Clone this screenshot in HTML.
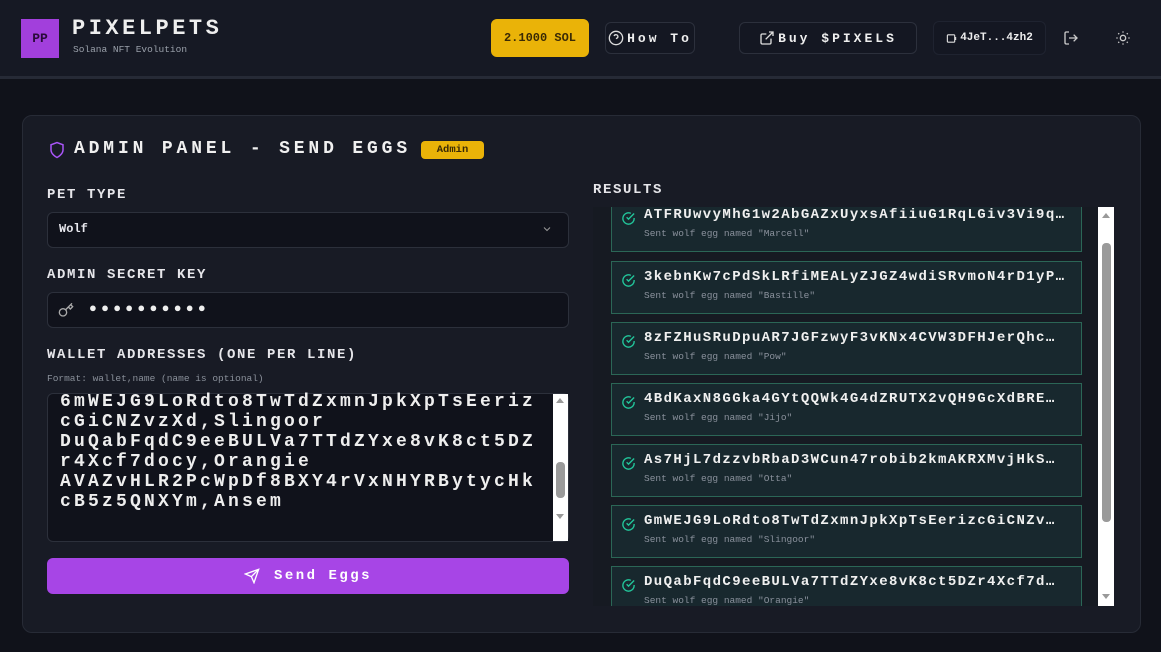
<!DOCTYPE html>
<html><head><meta charset="utf-8"><style>
*{box-sizing:border-box;margin:0;padding:0}
body{width:1161px;height:652px;overflow:hidden;background:#10121a;font-family:"Liberation Mono",monospace;color:#e8e8ee;position:relative}
.hdr{position:absolute;left:0;top:0;width:1161px;height:79px;background:#161924;border-bottom:3px solid #262a36}
.abs{position:absolute}
.logo{left:21px;top:19px;width:38px;height:39px;background:#a23fdc;color:#2a0a3a;font-weight:bold;font-size:13px;line-height:39px;text-align:center}
.btn{position:absolute;border:1px solid #2c303c;border-radius:6px;background:#141722;color:#eee;font-weight:bold;display:flex;align-items:center;justify-content:center;gap:3px}
.card{left:22px;top:115px;width:1119px;height:518px;background:#181b25;border:1px solid #272b36;border-radius:10px}
.lbl{font-size:14px;font-weight:bold;color:#e6e6ea;letter-spacing:1.6px}
.inp{position:absolute;left:47px;width:522px;background:#10121b;border:1px solid #2c303b;border-radius:6px}
.item{position:absolute;left:18px;width:471px;height:53px;background:#18282e;border:1px solid #2b6656}
.item .a{position:absolute;left:32px;top:7px;font-size:14px;font-weight:bold;color:#f0f0f0;white-space:nowrap;letter-spacing:1.4px}
.item .s{position:absolute;left:32px;top:28px;font-size:9.5px;color:#8a919c}
.item svg{position:absolute;left:9px;top:11px}
</style></head><body>
<div class="hdr"></div>
<div class="abs logo">PP</div>
<div class="abs" style="left:72px;top:16px;font-size:22px;font-weight:bold;color:#eee;letter-spacing:3.5px">PIXELPETS</div>
<div class="abs" style="left:73px;top:44px;font-size:9.5px;color:#9aa0aa">Solana NFT Evolution</div>
<div class="btn" style="left:491px;top:19px;width:98px;height:38px;background:#eab308;border-color:#eab308;color:#3a2a05;font-size:12px">2.1000 SOL</div>
<div class="btn" style="left:605px;top:22px;width:90px;height:32px;font-size:13px;letter-spacing:3px"><svg width="16" height="16" viewBox="0 0 24 24" fill="none" stroke="#ddd" stroke-width="2"><circle cx="12" cy="12" r="10"/><path d="M9.1 9a3 3 0 0 1 5.8 1c0 2-3 3-3 3M12 17h.01"/></svg>How To</div>
<div class="btn" style="left:739px;top:22px;width:178px;height:32px;font-size:13px;letter-spacing:3px"><svg width="16" height="16" viewBox="0 0 24 24" fill="none" stroke="#ddd" stroke-width="2"><path d="M15 3h6v6M10 14 21 3M18 13v6a2 2 0 0 1-2 2H5a2 2 0 0 1-2-2V8a2 2 0 0 1 2-2h6"/></svg>Buy $PIXELS</div>
<div class="btn" style="left:933px;top:21px;width:113px;height:34px;font-size:11px;border-color:#1f2330"><svg width="11" height="11" viewBox="0 0 24 24" fill="none" stroke="#ddd" stroke-width="2.5"><rect x="3" y="4" width="16" height="16" rx="2"/><path d="M19 10h2v4h-2"/></svg>4JeT...4zh2</div>
<svg class="abs" style="left:1063px;top:30px" width="16" height="16" viewBox="0 0 24 24" fill="none" stroke="#ccc" stroke-width="2"><path d="M9 21H5a2 2 0 0 1-2-2V5a2 2 0 0 1 2-2h4M16 17l5-5-5-5M21 12H9"/></svg>
<svg class="abs" style="left:1115px;top:30px" width="16" height="16" viewBox="0 0 24 24" fill="none" stroke="#ccc" stroke-width="2"><circle cx="12" cy="12" r="4"/><path d="M12 2v2M12 20v2M4.9 4.9l1.4 1.4M17.7 17.7l1.4 1.4M2 12h2M20 12h2M4.9 19.1l1.4-1.4M17.7 6.3l1.4-1.4"/></svg>

<div class="abs card"></div>
<svg class="abs" style="left:48px;top:140px" width="18" height="20" viewBox="0 0 24 24" fill="none" stroke="#a855f7" stroke-width="2"><path d="M12 22s8-4 8-10V5l-8-3-8 3v7c0 6 8 10 8 10z"/></svg>
<div class="abs" style="left:74px;top:139px;font-size:18px;font-weight:bold;color:#f0f0f0;letter-spacing:3.85px">ADMIN PANEL - SEND EGGS</div>
<div class="abs" style="left:421px;top:141px;width:63px;height:18px;background:#eab308;border-radius:4px;color:#3a2a05;font-size:10.5px;font-weight:bold;text-align:center;line-height:18px">Admin</div>

<div class="abs lbl" style="left:47px;top:187px">PET TYPE</div>
<div class="inp" style="top:212px;height:36px"></div>
<div class="abs" style="left:59px;top:222px;font-size:12px;font-weight:bold">Wolf</div>
<svg class="abs" style="left:541px;top:223px" width="12" height="12" viewBox="0 0 24 24" fill="none" stroke="#999" stroke-width="2"><path d="M6 9l6 6 6-6"/></svg>
<div class="abs lbl" style="left:47px;top:267px">ADMIN SECRET KEY</div>
<div class="inp" style="top:292px;height:36px"></div>
<svg class="abs" style="left:58px;top:302px" width="16" height="16" viewBox="0 0 24 24" fill="none" stroke="#aaa" stroke-width="2"><circle cx="7.5" cy="15.5" r="5.5"/><path d="M21 2l-9.6 9.6M15.5 7.5l3 3L22 7l-3-3"/></svg>
<div class="abs" style="left:89px;top:301px;font-size:13px;letter-spacing:4.3px;color:#eee">●●●●●●●●●●</div>
<div class="abs lbl" style="left:47px;top:347px">WALLET ADDRESSES (ONE PER LINE)</div>
<div class="abs" style="left:47px;top:373px;font-size:9.5px;color:#8a909a">Format: wallet,name (name is optional)</div>
<div class="inp" style="top:393px;height:149px;overflow:hidden"></div>
<div class="abs" style="left:60px;top:392px;font-size:18px;font-weight:bold;line-height:20px;color:#eee;white-space:pre;letter-spacing:3.2px">6mWEJG9LoRdto8TwTdZxmnJpkXpTsEeriz
cGiCNZvzXd,Slingoor
DuQabFqdC9eeBULVa7TTdZYxe8vK8ct5DZ
r4Xcf7docy,Orangie
AVAZvHLR2PcWpDf8BXY4rVxNHYRBytycHk
cB5z5QNXYm,Ansem</div>
<div class="abs" style="left:553px;top:394px;width:15px;height:147px;background:#fff"><div style="position:absolute;left:3px;top:68px;width:9px;height:36px;background:#9a9a9a;border-radius:4px"></div><div style="position:absolute;left:3px;top:4px;border:4px solid transparent;border-bottom:5px solid #999;border-top:0"></div><div style="position:absolute;left:3px;top:120px;border:4px solid transparent;border-top:5px solid #999;border-bottom:0"></div></div>
<div class="abs" style="left:47px;top:558px;width:522px;height:36px;background:#a745e6;border-radius:6px;display:flex;align-items:center;justify-content:center;gap:14px;font-weight:bold;font-size:14px;letter-spacing:2.5px;color:#fff"><svg width="16" height="16" viewBox="0 0 24 24" fill="none" stroke="#fff" stroke-width="2"><path d="M22 2 11 13M22 2l-7 20-4-9-9-4 20-7z"/></svg>Send Eggs</div>

<div class="abs lbl" style="left:593px;top:182px">RESULTS</div>
<div class="abs" style="left:593px;top:207px;width:521px;height:399px;background:#161a22;overflow:hidden">
<div class="item" style="top:-8px"><svg width="15" height="15" viewBox="0 0 24 24" fill="none" stroke="#22c59a" stroke-width="2.2"><path d="M21 11.1V12a9 9 0 1 1-5.3-8.2M21 4 12 13l-3-3"/></svg><div class="a">ATFRUwvyMhG1w2AbGAZxUyxsAfiiuG1RqLGiv3Vi9q…</div><div class="s">Sent wolf egg named "Marcell"</div></div>
<div class="item" style="top:54px"><svg width="15" height="15" viewBox="0 0 24 24" fill="none" stroke="#22c59a" stroke-width="2.2"><path d="M21 11.1V12a9 9 0 1 1-5.3-8.2M21 4 12 13l-3-3"/></svg><div class="a">3kebnKw7cPdSkLRfiMEALyZJGZ4wdiSRvmoN4rD1yP…</div><div class="s">Sent wolf egg named "Bastille"</div></div>
<div class="item" style="top:115px"><svg width="15" height="15" viewBox="0 0 24 24" fill="none" stroke="#22c59a" stroke-width="2.2"><path d="M21 11.1V12a9 9 0 1 1-5.3-8.2M21 4 12 13l-3-3"/></svg><div class="a">8zFZHuSRuDpuAR7JGFzwyF3vKNx4CVW3DFHJerQhc…</div><div class="s">Sent wolf egg named "Pow"</div></div>
<div class="item" style="top:176px"><svg width="15" height="15" viewBox="0 0 24 24" fill="none" stroke="#22c59a" stroke-width="2.2"><path d="M21 11.1V12a9 9 0 1 1-5.3-8.2M21 4 12 13l-3-3"/></svg><div class="a">4BdKaxN8GGka4GYtQQWk4G4dZRUTX2vQH9GcXdBRE…</div><div class="s">Sent wolf egg named "Jijo"</div></div>
<div class="item" style="top:237px"><svg width="15" height="15" viewBox="0 0 24 24" fill="none" stroke="#22c59a" stroke-width="2.2"><path d="M21 11.1V12a9 9 0 1 1-5.3-8.2M21 4 12 13l-3-3"/></svg><div class="a">As7HjL7dzzvbRbaD3WCun47robib2kmAKRXMvjHkS…</div><div class="s">Sent wolf egg named "Otta"</div></div>
<div class="item" style="top:298px"><svg width="15" height="15" viewBox="0 0 24 24" fill="none" stroke="#22c59a" stroke-width="2.2"><path d="M21 11.1V12a9 9 0 1 1-5.3-8.2M21 4 12 13l-3-3"/></svg><div class="a">GmWEJG9LoRdto8TwTdZxmnJpkXpTsEerizcGiCNZv…</div><div class="s">Sent wolf egg named "Slingoor"</div></div>
<div class="item" style="top:359px"><svg width="15" height="15" viewBox="0 0 24 24" fill="none" stroke="#22c59a" stroke-width="2.2"><path d="M21 11.1V12a9 9 0 1 1-5.3-8.2M21 4 12 13l-3-3"/></svg><div class="a">DuQabFqdC9eeBULVa7TTdZYxe8vK8ct5DZr4Xcf7d…</div><div class="s">Sent wolf egg named "Orangie"</div></div>
<div style="position:absolute;left:505px;top:0;width:16px;height:399px;background:#fff"><div style="position:absolute;left:4px;top:36px;width:9px;height:279px;background:#9a9a9a;border-radius:4px"></div><div style="position:absolute;left:4px;top:6px;border:4px solid transparent;border-bottom:5px solid #999;border-top:0"></div><div style="position:absolute;left:4px;top:387px;border:4px solid transparent;border-top:5px solid #999;border-bottom:0"></div></div>
</div>
</body></html>
